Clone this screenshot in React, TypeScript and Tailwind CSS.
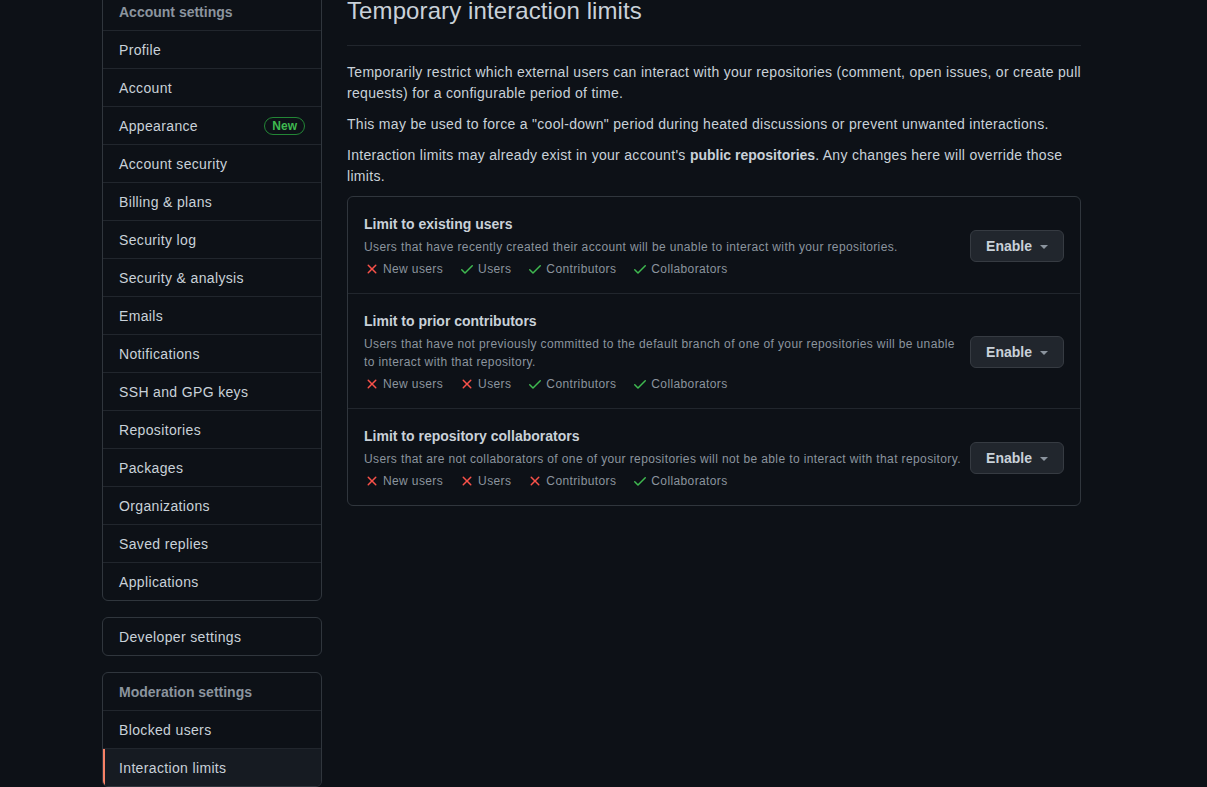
import React from "react"

const accountItems = [
  "Profile",
  "Account",
  "Appearance",
  "Account security",
  "Billing & plans",
  "Security log",
  "Security & analysis",
  "Emails",
  "Notifications",
  "SSH and GPG keys",
  "Repositories",
  "Packages",
  "Organizations",
  "Saved replies",
  "Applications",
]

type Audience = { label: string; ok: boolean }

const limits: { title: string; desc: string; audience: Audience[] }[] = [
  {
    title: "Limit to existing users",
    desc: "Users that have recently created their account will be unable to interact with your repositories.",
    audience: [
      { label: "New users", ok: false },
      { label: "Users", ok: true },
      { label: "Contributors", ok: true },
      { label: "Collaborators", ok: true },
    ],
  },
  {
    title: "Limit to prior contributors",
    desc: "Users that have not previously committed to the default branch of one of your repositories will be unable to interact with that repository.",
    audience: [
      { label: "New users", ok: false },
      { label: "Users", ok: false },
      { label: "Contributors", ok: true },
      { label: "Collaborators", ok: true },
    ],
  },
  {
    title: "Limit to repository collaborators",
    desc: "Users that are not collaborators of one of your repositories will not be able to interact with that repository.",
    audience: [
      { label: "New users", ok: false },
      { label: "Users", ok: false },
      { label: "Contributors", ok: false },
      { label: "Collaborators", ok: true },
    ],
  },
]

function CheckIcon() {
  return (
    <svg width="16" height="16" viewBox="0 0 16 16" className="fill-[#3fb950] shrink-0">
      <path d="M13.78 4.22a.75.75 0 010 1.06l-7.25 7.25a.75.75 0 01-1.06 0L2.22 9.28a.75.75 0 011.06-1.06L6 10.94l6.72-6.72a.75.75 0 011.06 0z" />
    </svg>
  )
}

function XIcon() {
  return (
    <svg width="16" height="16" viewBox="0 0 16 16" className="fill-[#f85149] shrink-0">
      <path d="M3.72 3.72a.75.75 0 011.06 0L8 6.94l3.22-3.22a.75.75 0 111.06 1.06L9.06 8l3.22 3.22a.75.75 0 11-1.06 1.06L8 9.06l-3.22 3.22a.75.75 0 01-1.06-1.06L6.94 8 3.72 4.78a.75.75 0 010-1.06z" />
    </svg>
  )
}

function MenuBox({ heading, items, selected }: { heading?: string; items: string[]; selected?: string }) {
  return (
    <div className="border border-[#30363d] rounded-md overflow-hidden">
      {heading && (
        <div className="h-[38px] px-4 flex items-center text-sm font-semibold text-[#8b949e] border-b border-[#21262d]">
          {heading}
        </div>
      )}
      {items.map((item, i) => {
        const last = i === items.length - 1
        return (
          <div
            key={item}
            className={
              "relative px-4 flex items-center justify-between text-sm tracking-[0.35px] text-[#c9d1d9] " +
              (last ? "h-[37px] " : "h-[38px] border-b border-[#21262d] ") +
              (item === selected ? "bg-[#161b22]" : "")
            }
          >
            {item === selected && <span className="absolute left-0 top-0 bottom-0 w-[2px] bg-[#f78166]" />}
            <span>{item}</span>
            {item === "Appearance" && (
              <span className="h-[18px] px-[7px] flex items-center rounded-full border border-[#238636] text-xs font-semibold tracking-normal text-[#3fb950]">
                New
              </span>
            )}
          </div>
        )
      })}
    </div>
  )
}

export default function App() {
  return (
    <div
      className="min-h-screen bg-[#0d1117] text-[#c9d1d9] overflow-hidden"
      style={{ fontFamily: '"Liberation Sans", Arial, sans-serif' }}
    >
      <div className="-mt-[8px] pl-[102px] flex gap-[25px] items-start">
        <aside className="w-[220px] shrink-0 flex flex-col gap-4">
          <MenuBox heading="Account settings" items={accountItems} />
          <MenuBox items={["Developer settings"]} />
          <MenuBox heading="Moderation settings" items={["Blocked users", "Interaction limits"]} selected="Interaction limits" />
        </aside>

        <main className="w-[734px]">
          <div className="pt-[1px] pb-4 mb-4 border-b border-[#21262d]">
            <h2 className="text-2xl leading-[36px] font-normal tracking-[0.1px] text-[#c9d1d9]">Temporary interaction limits</h2>
          </div>
          <div className="text-sm leading-[21px] tracking-[0.3px]">
            <p className="mb-[10px]">
              Temporarily restrict which external users can interact with your repositories (comment, open issues, or create pull
              requests) for a configurable period of time.
            </p>
            <p className="mb-[10px]">
              This may be used to force a "cool-down" period during heated discussions or prevent unwanted interactions.
            </p>
            <p className="mb-[9px]">
              Interaction limits may already exist in your account's{" "}
              <strong className="font-semibold tracking-normal">public repositories</strong>. Any changes here will override those
              limits.
            </p>
          </div>

          <div className="border border-[#30363d] rounded-md">
            {limits.map((l, i) => (
              <div
                key={l.title}
                className={
                  "pt-[17px] pb-[15px] px-4 flex items-center gap-2 " +
                  (i < limits.length - 1 ? "border-b border-[#21262d]" : "")
                }
              >
                <div className="flex-1 min-w-0">
                  <div className="text-sm leading-[21px] font-semibold text-[#c9d1d9]">{l.title}</div>
                  <div className="mt-[3px] text-xs leading-[18px] tracking-[0.38px] text-[#8b949e]">{l.desc}</div>
                  <div className="mt-1 flex items-center text-xs leading-[18px] tracking-[0.38px] text-[#8b949e]">
                    {l.audience.map((a) => (
                      <span key={a.label} className="flex items-center gap-[3px] mr-4">
                        {a.ok ? <CheckIcon /> : <XIcon />}
                        {a.label}
                      </span>
                    ))}
                  </div>
                </div>
                <button className="h-8 w-[94px] shrink-0 flex items-center justify-center gap-2 rounded-md bg-[#21262d] border border-[#363b42] text-sm font-semibold text-[#c9d1d9]">
                  Enable
                  <span className="w-0 h-0 border-x-4 border-x-transparent border-t-4 border-t-[#8b949e] mt-[1px]" />
                </button>
              </div>
            ))}
          </div>
        </main>
      </div>
    </div>
  )
}
